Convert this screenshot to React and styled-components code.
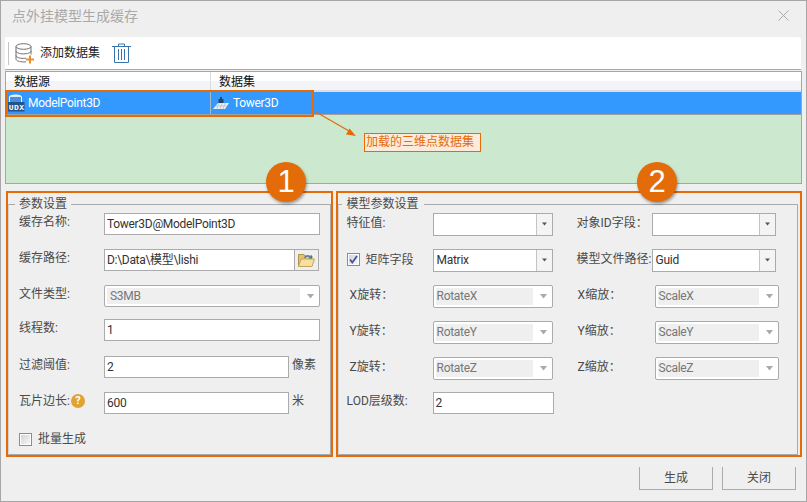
import styled, { createGlobalStyle } from "styled-components";

const ORANGE = "#e36c09";
const FONT = `Roboto, "Noto Sans CJK SC", sans-serif`;

const GlobalStyle = createGlobalStyle`
  html, body {
    margin: 0;
    padding: 0;
    background: #efefef;
  }
  * {
    box-sizing: border-box;
  }
`;

const DatabaseIcon = () => (
  <svg width="19" height="21" viewBox="0 0 19 21" fill="none">
    <g stroke="#6f6f6f" strokeWidth="1">
      <ellipse cx="8.5" cy="3.5" rx="7.5" ry="2.8" />
      <path d="M1 3.5v12.5c0 1.6 3.4 2.9 7.5 2.9 1 0 1.6 0 2.5-.2" />
      <path d="M16 3.5v8" />
      <path d="M1 8c0 1.6 3.4 2.9 7.5 2.9S16 9.6 16 8" />
      <path d="M1 12.5c0 1.6 3.4 2.9 7.5 2.9 1 0 1.6 0 2.5-.2" />
    </g>
    <path d="M14 12.5h2v3h3v2h-3v3h-2v-3h-3v-2h3z" fill="#e8912c" />
  </svg>
);

const TrashIcon = () => (
  <svg width="19" height="20" viewBox="0 0 19 20" fill="none">
    <g stroke="#3a74ad" strokeWidth="1">
      <path d="M0 3.500h19" />
      <path d="M6.500 3.500v-2.500h6v2.500" />
      <path d="M2.500 3.500v16h14v-16" />
      <path d="M6.500 6v11M9.500 6v11M12.500 6v11" />
    </g>
  </svg>
);

const UdxIcon = () => (
  <svg width="17" height="18" viewBox="0 0 17 18" fill="none">
    <ellipse cx="7.5" cy="3" rx="6" ry="2" fill="#dfe9f5" stroke="#fff" />
    <path d="M1.500 3v7h12V3" fill="#4a8fdc" stroke="#fff" />
    <rect x="0" y="8" width="16.5" height="9.5" fill="#24528c" />
    <text x="8.2" y="15.500" textAnchor="middle" fontSize="8" fontWeight="700" fontFamily="Liberation Mono, monospace" fill="#fff" textLength="15">UDX</text>
  </svg>
);

const TowerIcon = () => (
  <svg width="17" height="14" viewBox="0 0 17 14" fill="none">
    <path d="M5 7h11l-4 6H0z" fill="#eceff3" />
    <path d="M3 10h11M6 7l-2 6M9 7l-2 6M12 7l-2 6" stroke="#aab2bd" strokeWidth=".6" />
    <path d="M7 1h2v2h1.500v4h-5V3H7z" fill="#26466f" />
  </svg>
);

const FolderIcon = () => (
  <svg width="17" height="14" viewBox="0 0 17 14" fill="none">
    <path d="M.5 1.500h5.500l1 1.500h7v10H.5z" fill="#e6c070" stroke="#b2934c" />
    <path d="M3 6h13.500l-2.500 7.500H.5z" fill="#f5e0a2" stroke="#c4a55c" />
    <path d="M6.500 5c1-2.500 4.500-3 6-.5" stroke="#2f7ac0" strokeWidth="1.300" />
    <path d="M14 2v3.500h-3.500z" fill="#2f7ac0" />
  </svg>
);

const CheckMark = () => (
  <svg width="9" height="9" viewBox="0 0 9 9" fill="none">
    <path d="M1 4.500l2.300 3L8 1" stroke="#3c54a8" strokeWidth="1.800" />
  </svg>
);

const Caret = ({ $disabled }) => (
  <svg width="9" height="5" viewBox="0 0 9 5">
    {$disabled ? <path d="M1 0h7L4.500 4.500z" fill="#aaa" /> : <path d="M2 .5h5L4.500 3.500z" fill="#555" />}
  </svg>
);

const Window = styled.div`
  position: relative;
  width: 807px;
  height: 502px;
  display: flex;
  flex-direction: column;
  padding: 0 4px;
  background: #efefef;
  border: 1px solid #a6a6a6;
  font-family: ${FONT};
  font-size: 12px;
  color: #4a4a4a;
  overflow: hidden;
`;

const TitleBar = styled.div`
  height: 36px;
  flex: none;
  display: flex;
  align-items: flex-start;
  justify-content: space-between;
  padding: 5px 13px 0 7px;
  font-size: 14px;
  line-height: 20px;
  color: #a9a9a9;
`;

const CloseMark = styled.svg`
  margin-top: 4px;
`;

const Toolbar = styled.div`
  height: 33px;
  width: 796px;
  flex: none;
  display: flex;
  align-items: center;
  padding-left: 3px;
  background: #fff;
  border-bottom: 1px solid #a9a9a9;
  border-radius: 0 3px 0 0;
  color: #222;
`;

const ToolSeparator = styled.span`
  width: 1px;
  height: 23px;
  margin-right: 6px;
  background: #c4c4c4;
`;

const ToolLabel = styled.span`
  margin: 0 12px 0 6px;
  line-height: 16px;
`;

const Table = styled.div`
  height: 113px;
  flex: none;
  margin-top: 1px;
  display: flex;
  flex-direction: column;
  background: #cce8cf;
  border: 1px solid #a6a6a6;
`;

const TableHead = styled.div`
  height: 19px;
  flex: none;
  display: flex;
  background: linear-gradient(#fff 50%, #f3f4f7 50%);
  border-bottom: 1px solid #dcdcdc;
  color: #111;
  line-height: 20px;
`;

const HeadCell = styled.div`
  width: ${(p) => p.$width || "auto"};
  padding-left: 8px;
  border-right: ${(p) => (p.$width ? "1px solid #dcdcdc" : "none")};
`;

const SelectedRow = styled.div`
  height: 23px;
  margin-top: 1px;
  flex: none;
  display: flex;
  background: #3399ff;
  border-bottom: 1px solid #a0a0a0;
  color: #fff;
`;

const RowCell = styled.div`
  width: ${(p) => p.$width || "auto"};
  display: flex;
  align-items: center;
  gap: 3px;
  padding-left: 2px;
  line-height: 22px;
  letter-spacing: -0.3px;
  border-right: ${(p) => (p.$width ? "1px solid #a8b8cc" : "none")};
`;

const Panels = styled.div`
  flex: none;
  display: flex;
  gap: 3px;
  margin: 7px 0 0 1px;
`;

const Panel = styled.div`
  width: ${(p) => p.$width}px;
  height: 266px;
  display: flex;
  padding: 3px ${(p) => p.$inset}px 0 0;
  border: 2px solid ${ORANGE};
`;

const Group = styled.fieldset`
  flex: 1;
  min-width: 0;
  margin: 0;
  padding: 1px 0 0 ${(p) => p.$indent}px;
  border: 1px solid #aaa;
  border-left-color: #d4d4d4;
`;

const Legend = styled.legend`
  margin-left: -${(p) => p.$pad}px;
  padding: 0 ${(p) => p.$pad}px;
  font-size: 12px;
  line-height: 16px;
  color: #4a4a4a;
`;

const Row = styled.div`
  display: flex;
  align-items: center;
  margin-top: ${(p) => p.$top || 0}px;
`;

const Label = styled.span`
  flex: none;
  width: ${(p) => p.$width}px;
  padding-left: ${(p) => p.$indent || 0}px;
  margin-left: ${(p) => p.$left || 0}px;
  margin-bottom: 4px;
  display: flex;
  align-items: center;
  gap: 1px;
  line-height: 16px;
  white-space: nowrap;
`;

const Input = styled.div`
  flex: none;
  width: ${(p) => p.$width}px;
  height: ${(p) => p.$height || 22}px;
  padding-left: 2px;
  background: #fff;
  border: 1px solid #ababab;
  color: #333;
  line-height: 20px;
  letter-spacing: -0.3px;
  white-space: nowrap;
`;

const Unit = styled.span`
  margin: 0 0 4px 3px;
  line-height: 16px;
`;

const BrowseButton = styled.div`
  width: 24px;
  height: 22px;
  flex: none;
  display: flex;
  align-items: center;
  justify-content: center;
  background: #efefef;
  border: 1px solid #ababab;
  border-left: none;
`;

const Combo = styled.div`
  flex: none;
  width: ${(p) => p.$width}px;
  height: ${(p) => p.$height || 23}px;
  display: flex;
  background: #fff;
  border: 1px solid #ababab;
  color: #333;
  line-height: 20px;
`;

const ComboText = styled.div`
  flex: 1;
  padding-left: 3px;
  letter-spacing: -0.3px;
`;

const ComboArrow = styled.div`
  width: 16px;
  flex: none;
  display: flex;
  align-items: center;
  justify-content: center;
  border-left: 1px solid #c4c4c4;
  background: #f4f4f4;
`;

const LockedCombo = styled.div`
  flex: none;
  width: ${(p) => p.$width}px;
  height: ${(p) => p.$height}px;
  display: flex;
  align-items: center;
  padding: 2px 4px 2px 2px;
  background: #fff;
  border: 1px solid #ababab;
  border-radius: 2px;
`;

const LockedText = styled.div`
  flex: 1;
  height: 100%;
  margin-right: 6px;
  padding-left: ${(p) => p.$indent || 1}px;
  background: #efefef;
  color: #777;
  line-height: 17px;
  letter-spacing: -0.3px;
`;

const CheckRow = styled.label`
  display: flex;
  align-items: center;
  width: ${(p) => p.$width}px;
  flex: none;
  gap: 6px;
  line-height: 16px;
  margin-bottom: 2px;
`;

const Box = styled.span`
  width: 13px;
  height: 13px;
  flex: none;
  display: flex;
  align-items: center;
  justify-content: center;
  border: 1px solid #8c8c8c;
  background: linear-gradient(135deg, #d0d0d0, #fbfbfb);
  box-shadow: inset 0 0 0 1px #fff;
`;

const HelpBadge = styled.span`
  width: 14px;
  height: 14px;
  border-radius: 50%;
  display: flex;
  align-items: center;
  justify-content: center;
  background: #e0a233;
  color: #fff;
  font-size: 11px;
  font-weight: 700;
  line-height: 14px;
`;

const Footer = styled.div`
  display: flex;
  justify-content: flex-end;
  gap: 9px;
  margin-top: 10px;
  padding-right: 6px;
`;

const Button = styled.div`
  width: 74px;
  height: 23px;
  text-align: center;
  border: 1px solid #ababab;
  border-width: 0 1px 1px;
  line-height: 22px;
  color: #4a4a4a;
`;

const Highlight = styled.div`
  position: absolute;
  left: 4px;
  top: 89px;
  width: 309px;
  height: 27px;
  border: 2px solid ${ORANGE};
`;

const Arrow = styled.svg`
  position: absolute;
  left: 314px;
  top: 110px;
`;

const Note = styled.div`
  position: absolute;
  left: 363px;
  top: 132px;
  width: 117px;
  height: 19px;
  padding-left: 1px;
  background: #fdeadb;
  border: 1px solid ${ORANGE};
  color: ${ORANGE};
  line-height: 16px;
  white-space: nowrap;
`;

const Badge = styled.div`
  position: absolute;
  left: ${(p) => p.$left}px;
  top: 161px;
  width: 40px;
  height: 40px;
  border-radius: 50%;
  background: ${ORANGE};
  box-shadow: 1px 2px 3px rgba(0, 0, 0, 0.35);
  color: #fff;
  font-family: "Liberation Sans", sans-serif;
  font-size: 31px;
  line-height: 40px;
  text-align: center;
`;

const Locked = ({ text, width }) => (
  <LockedCombo $width={width} $height={23}>
    <LockedText>{text}</LockedText>
    <Caret $disabled />
  </LockedCombo>
);

const Drop = ({ text, width }) => (
  <Combo $width={width}>
    <ComboText>{text}</ComboText>
    <ComboArrow>
      <Caret />
    </ComboArrow>
  </Combo>
);

const axes = ["X", "Y", "Z"];

const App = () => (
  <Window>
    <GlobalStyle />
    <TitleBar>
      <span>点外挂模型生成缓存</span>
      <CloseMark width="11" height="11" viewBox="0 0 11 11">
        <path d="M.5.500l10 10M10.500.500l-10 10" stroke="#aaa" strokeWidth="1" />
      </CloseMark>
    </TitleBar>

    <Toolbar>
      <ToolSeparator />
      <DatabaseIcon />
      <ToolLabel>添加数据集</ToolLabel>
      <TrashIcon />
    </Toolbar>

    <Table>
      <TableHead>
        <HeadCell $width="205px">数据源</HeadCell>
        <HeadCell>数据集</HeadCell>
      </TableHead>
      <SelectedRow>
        <RowCell $width="205px">
          <UdxIcon />
          ModelPoint3D
        </RowCell>
        <RowCell>
          <TowerIcon />
          Tower3D
        </RowCell>
      </SelectedRow>
    </Table>

    <Panels>
      <Panel $width={327} $inset={0}>
        <Group $indent={10}>
          <Legend $pad={4}>参数设置</Legend>
          <Row>
            <Label $width={85}>缓存名称:</Label>
            <Input $width={216}>Tower3D@ModelPoint3D</Input>
          </Row>
          <Row $top={14}>
            <Label $width={85}>缓存路径:</Label>
            <Input $width={191}>D:\Data\模型\lishi</Input>
            <BrowseButton>
              <FolderIcon />
            </BrowseButton>
          </Row>
          <Row $top={14}>
            <Label $width={85}>文件类型:</Label>
            <LockedCombo $width={216} $height={22}>
              <LockedText $indent={3}>S3MB</LockedText>
              <Caret $disabled />
            </LockedCombo>
          </Row>
          <Row $top={12}>
            <Label $width={85}>线程数:</Label>
            <Input $width={216}>1</Input>
          </Row>
          <Row $top={15}>
            <Label $width={85}>过滤阈值:</Label>
            <Input $width={185}>2</Input>
            <Unit>像素</Unit>
          </Row>
          <Row $top={14}>
            <Label $width={85}>
              瓦片边长:
              <HelpBadge>?</HelpBadge>
            </Label>
            <Input $width={185}>600</Input>
            <Unit>米</Unit>
          </Row>
          <Row $top={17}>
            <CheckRow>
              <Box />
              批量生成
            </CheckRow>
          </Row>
        </Group>
      </Panel>

      <Panel $width={467} $inset={2}>
        <Group $indent={8}>
          <Legend $pad={5}>模型参数设置</Legend>
          <Row>
            <Label $width={86}>特征值:</Label>
            <Drop width={120} />
            <Label $width={75} $left={24}>对象ID字段：</Label>
            <Drop width={124} />
          </Row>
          <Row $top={13}>
            <CheckRow $width={86}>
              <Box>
                <CheckMark />
              </Box>
              矩阵字段
            </CheckRow>
            <Drop text="Matrix" width={120} />
            <Label $width={75} $left={24}>模型文件路径:</Label>
            <Drop text="Guid" width={124} />
          </Row>
          {axes.map((axis) => (
            <Row key={axis} $top={13}>
              <Label $width={86} $indent={3}>{axis}旋转：</Label>
              <Locked text={`Rotate${axis}`} width={120} />
              <Label $width={77} $left={25}>{axis}缩放：</Label>
              <Locked text={`Scale${axis}`} width={124} />
            </Row>
          ))}
          <Row $top={12}>
            <Label $width={86}>LOD层级数:</Label>
            <Input $width={121}>2</Input>
          </Row>
        </Group>
      </Panel>
    </Panels>

    <Footer>
      <Button>生成</Button>
      <Button>关闭</Button>
    </Footer>

    <Highlight />
    <Arrow width="46" height="30" viewBox="0 0 46 30">
      <path d="M1 1l33 19" stroke={ORANGE} strokeWidth="1.300" fill="none" />
      <path d="M41 25l-10-1.500 3.500-6z" fill={ORANGE} />
    </Arrow>
    <Note>加载的三维点数据集</Note>
    <Badge $left={265}>1</Badge>
    <Badge $left={636}>2</Badge>
  </Window>
);

export default App;
